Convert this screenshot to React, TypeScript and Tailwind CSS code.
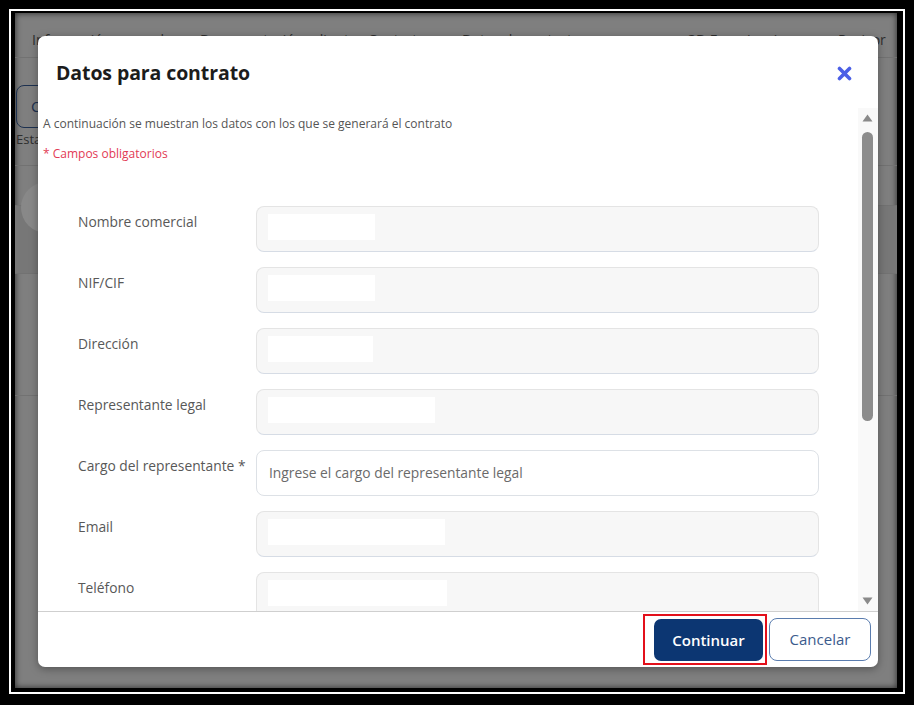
import React from "react";

type Field = {
  label: string;
  redact?: number;
  placeholder?: string;
};

const fields: Field[] = [
  { label: "Nombre comercial", redact: 107 },
  { label: "NIF/CIF", redact: 107 },
  { label: "Dirección", redact: 105 },
  { label: "Representante legal", redact: 167 },
  { label: "Cargo del representante *", placeholder: "Ingrese el cargo del representante legal" },
  { label: "Email", redact: 177 },
  { label: "Teléfono", redact: 179 },
];

const tabs = [
  { text: "Información general", w: "w-[168px]" },
  { text: "Documentación adjunta", w: "w-[168px]" },
  { text: "Contratos", w: "w-[94px]" },
  { text: "Datos de contacto", w: "w-[226px]" },
  { text: "3D Experiencias", w: "w-[150px]" },
  { text: "Revisor", w: "w-[70px]" },
];

const FieldRow: React.FC<{ field: Field }> = ({ field }) => (
  <div className="flex items-start">
    <div className="w-[178px] pt-[6px] text-[13.8px] leading-[20px] text-[#585858]">{field.label}</div>
    {field.placeholder ? (
      <div className="flex h-[46px] flex-1 items-center rounded-[8px] border border-[#dde1e6] bg-white pl-[12px] text-[13.8px] text-[#6a6a6a]">
        {field.placeholder}
      </div>
    ) : (
      <div className="h-[46px] flex-1 rounded-[8px] border border-[#e4e4e4] border-b-[#d6dce5] bg-[#f7f7f7] pl-[11px] pt-[7px]">
        <div className="h-[26px] bg-white" style={{ width: field.redact }} />
      </div>
    )}
  </div>
);

export default function App() {
  return (
    <div
      className="h-[705px] w-[914px] bg-black pb-[11px] pl-[9px] pr-[9px] pt-[9px]"
      style={{ fontFamily: "'Open Sans', Lato, sans-serif" }}
    >
      <div className="h-full w-full border-2 border-white">
        <div className="h-full w-full border-b-[4px] border-l-[4px] border-r-[6px] border-t-[2px] border-black">
          <div className="relative h-full w-full overflow-hidden bg-[#7f7f7f] shadow-[inset_0_0_6px_rgba(0,0,0,0.7)]">
            {/* dimmed page behind the dialog */}
            <div className="flex h-[45px] items-center overflow-hidden border-b border-[#727272] pl-[17px] pt-[8px]">
              {tabs.map((t) => (
                <div key={t.text} className={`${t.w} shrink-0 whitespace-nowrap text-[14px] text-[#2e2e2e]`}>
                  {t.text}
                </div>
              ))}
            </div>
            <div className="pt-[27px]">
              <div className="ml-[1px] flex h-[43px] w-[140px] items-center rounded-[8px] border-[1.5px] border-[#1d3150] pl-[14px] text-[15px] text-[#1d3150]">
                Contratos
              </div>
              <div className="pl-[1px] pt-[5px] text-[13px] leading-[13px] text-[#2e2e2e]">Estado</div>
            </div>
            <div className="mt-[19px] h-[40px] border-t border-[#727272]" />
            <div className="h-[69px] border-b border-t border-[#727272] bg-[#777777]" />
            <div className="h-[122px] border-b border-[#727272]" />
            <div className="absolute left-[6px] top-[169px] flex h-[51px] w-[51px] items-center justify-center rounded-full bg-[#888888] text-[16px] text-[#5a5a5a]">
              ‹
            </div>

            {/* dialog */}
            <div className="absolute left-[23px] top-[23px] flex h-[631px] w-[840px] flex-col overflow-hidden rounded-[7px] bg-white shadow-[0_2px_8px_rgba(0,0,0,0.35)]">
              <div className="flex h-[72px] shrink-0 items-center justify-between pl-[18px] pr-[26px] pt-[2px]">
                <div className="text-[19.5px] font-bold tracking-[-0.1px] text-[#1c1c1c]">Datos para contrato</div>
                <svg width="15" height="15" viewBox="0 0 15 15">
                  <path d="M2.5 2.5 L12.5 12.5 M12.5 2.5 L2.5 12.5" stroke="#4b5fe6" strokeWidth="3.6" strokeLinecap="round" />
                </svg>
              </div>

              <div className="flex h-[503px] shrink-0">
                <div className="flex-1 overflow-hidden pl-[5px] pt-[8px]">
                  <div className="text-[12px] leading-[16px] text-[#555555]">
                    A continuación se muestran los datos con los que se generará el contrato
                  </div>
                  <div className="mt-[14px] text-[12px] leading-[16px] text-[#e23a55]">* Campos obligatorios</div>
                  <div className="mt-[44px] flex flex-col gap-[15px] pl-[35px] pr-[39px]">
                    {fields.map((f) => (
                      <FieldRow key={f.label} field={f} />
                    ))}
                  </div>
                </div>
                <div className="flex w-[20px] shrink-0 flex-col items-center bg-[#f9f9f9] pr-[1px]">
                  <svg className="mt-[6px]" width="11" height="8" viewBox="0 0 11 8">
                    <path d="M5.5 0.5 L10.5 7.5 L0.5 7.5 Z" fill="#8a8a8a" />
                  </svg>
                  <div className="mt-[10px] h-[289px] w-[11px] rounded-full bg-[#8c8c8c]" />
                  <div className="flex-1" />
                  <svg className="mb-[6px]" width="11" height="8" viewBox="0 0 11 8">
                    <path d="M0.5 0.5 L10.5 0.5 L5.5 7.5 Z" fill="#8a8a8a" />
                  </svg>
                </div>
              </div>

              <div className="flex flex-1 items-center justify-end gap-[2px] border-t border-[#cfcfcf] pr-[7px]">
                <div className="border-2 border-[#e3101b] pb-[2px] pl-[9px] pr-[2px] pt-[3px]">
                  <button className="flex h-[42px] w-[109px] items-center justify-center rounded-[7px] bg-[#0c3672] text-[15px] font-semibold text-white">
                    Continuar
                  </button>
                </div>
                <button className="flex h-[43px] w-[102px] items-center justify-center rounded-[8px] border-[1.5px] border-[#5a7cae] bg-white text-[15px] font-medium text-[#3b5b8d]">
                  Cancelar
                </button>
              </div>
            </div>
          </div>
        </div>
      </div>
    </div>
  );
}
